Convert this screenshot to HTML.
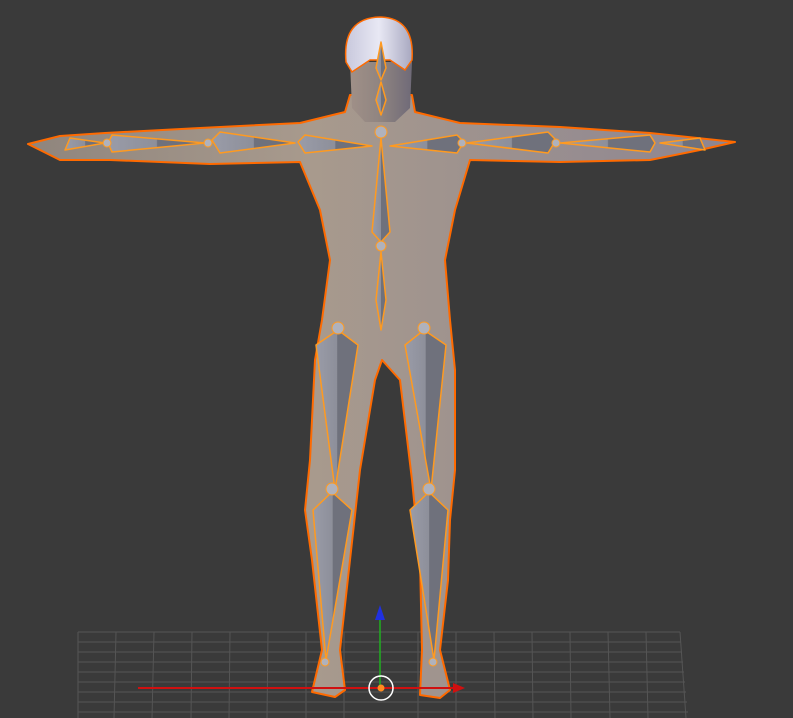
<!DOCTYPE html><html><head><style>html,body{margin:0;padding:0;background:#3a3a3a;width:793px;height:718px;overflow:hidden}</style></head><body>
<svg width="793" height="718" viewBox="0 0 793 718" xmlns="http://www.w3.org/2000/svg">
<defs>
<linearGradient id="sk" x1="0" x2="1"><stop offset="0" stop-color="#8f857d"/><stop offset=".4" stop-color="#a89a8d"/><stop offset="1" stop-color="#8d8591"/></linearGradient>
<linearGradient id="hr" x1="0" x2="1"><stop offset="0" stop-color="#c8c8dc"/><stop offset=".5" stop-color="#e8e8f4"/><stop offset="1" stop-color="#a8a8c0"/></linearGradient>
<linearGradient id="fc" x1="0" x2="1"><stop offset="0" stop-color="#a09088"/><stop offset=".5" stop-color="#8f8480"/><stop offset="1" stop-color="#6f6a78"/></linearGradient>
<linearGradient id="bn" x1="0" x2="1"><stop offset="0" stop-color="#9a9ca8"/><stop offset=".5" stop-color="#8d8f9a"/><stop offset=".51" stop-color="#6f717c"/><stop offset="1" stop-color="#6f717c"/></linearGradient>
</defs>
<g stroke="#555" stroke-width="1" fill="none">
<path d="M78 632H680M78 642H681M78 652H682M78 662H683M78 672H684M78 682H685M78 692H686M78 702H687M78 712H688"/>
<path d="M78 632V718M116 632L114 718M154 632L152 718M192 632L191 718M230 632L229 718M268 632L267 718M306 632V718M344 632V718M418 632V718M456 632V718M494 632L495 718M532 632L533 718M570 632L571 718M608 632L610 718M646 632L648 718M680 632L686 718"/>
</g>
<g fill="url(#sk)" stroke="#ff6a00" stroke-width="2" stroke-linejoin="round">
<path d="M28 144 L60 136 L105 133 L200 128 L300 123 L345 112 L350 95 L412 95 L415 112 L460 123 L560 127 L650 133 L735 142 L700 150 L650 160 L560 162 L470 160 L455 210 L445 260 L450 320 L455 370 L455 470 L450 520 L448 580 L440 650 L450 690 L440 698 L420 695 L422 650 L420 560 L412 480 L400 380 L382 360 L375 380 L360 470 L350 560 L340 650 L345 690 L335 697 L312 692 L322 650 L312 560 L305 510 L310 460 L315 360 L322 320 L330 260 L320 210 L300 162 L210 164 L110 160 L60 160 Z"/>
</g>
<path d="M350 62 L412 62 L410 108 L395 122 L365 122 L352 108 Z" fill="url(#fc)"/>
<path d="M346 62 Q342 18 380 17 Q415 18 412 60 L405 70 L390 60 L370 60 L352 72 Z" fill="url(#hr)" stroke="#ff6a00" stroke-width="1.5"/>
<g fill="url(#bn)" stroke="#ff9a20" stroke-width="1.5" stroke-linejoin="round">
<path d="M381 42 L386 68 L381 80 L376 68 Z"/>
<path d="M381 82 L386 100 L381 115 L376 100 Z"/>
<path d="M381 138 L390 232 L381 242 L372 232 Z"/>
<path d="M381 252 L386 300 L381 330 L376 300 Z"/>
<path d="M372 146 L305 135 L298 142 L305 153 Z"/>
<path d="M295 143 L220 132 L212 140 L220 153 Z"/>
<path d="M205 143 L112 135 L108 143 L112 152 Z"/>
<path d="M390 146 L457 135 L464 142 L457 153 Z"/>
<path d="M467 143 L548 132 L556 140 L548 153 Z"/>
<path d="M560 143 L650 135 L655 143 L650 152 Z"/>
<path d="M338 330 L358 345 L335 490 L316 345 Z"/>
<path d="M424 330 L446 345 L431 490 L405 345 Z"/>
<path d="M332 492 L352 510 L326 660 L313 510 Z"/>
<path d="M429 492 L448 510 L434 660 L410 510 Z"/>
<path d="M105 143 L70 138 L65 150 Z"/>
<path d="M660 143 L700 138 L705 150 Z"/>
</g>
<g fill="#b0b2bc" stroke="#ff9a20" stroke-width="1">
<circle cx="381" cy="132" r="6"/><circle cx="381" cy="246" r="5"/><circle cx="338" cy="328" r="6"/><circle cx="424" cy="328" r="6"/>
<circle cx="332" cy="489" r="6"/><circle cx="429" cy="489" r="6"/><circle cx="208" cy="143" r="4"/><circle cx="107" cy="143" r="4"/>
<circle cx="462" cy="143" r="4"/><circle cx="556" cy="143" r="4"/><circle cx="325" cy="662" r="4"/><circle cx="433" cy="662" r="4"/>
</g>
<line x1="138" y1="688" x2="455" y2="688" stroke="#d01010" stroke-width="2"/>
<path d="M453 683 L465 688 L453 693 Z" fill="#d01010"/>
<line x1="380" y1="618" x2="380" y2="690" stroke="#20b020" stroke-width="1.5"/>
<path d="M375 620 L380 605 L385 620 Z" fill="#2030e0"/>
<circle cx="381" cy="688" r="12" fill="none" stroke="#fff" stroke-width="1.5"/>
<circle cx="381" cy="688" r="3.5" fill="#ff8a20"/>
</svg>
</body></html>
